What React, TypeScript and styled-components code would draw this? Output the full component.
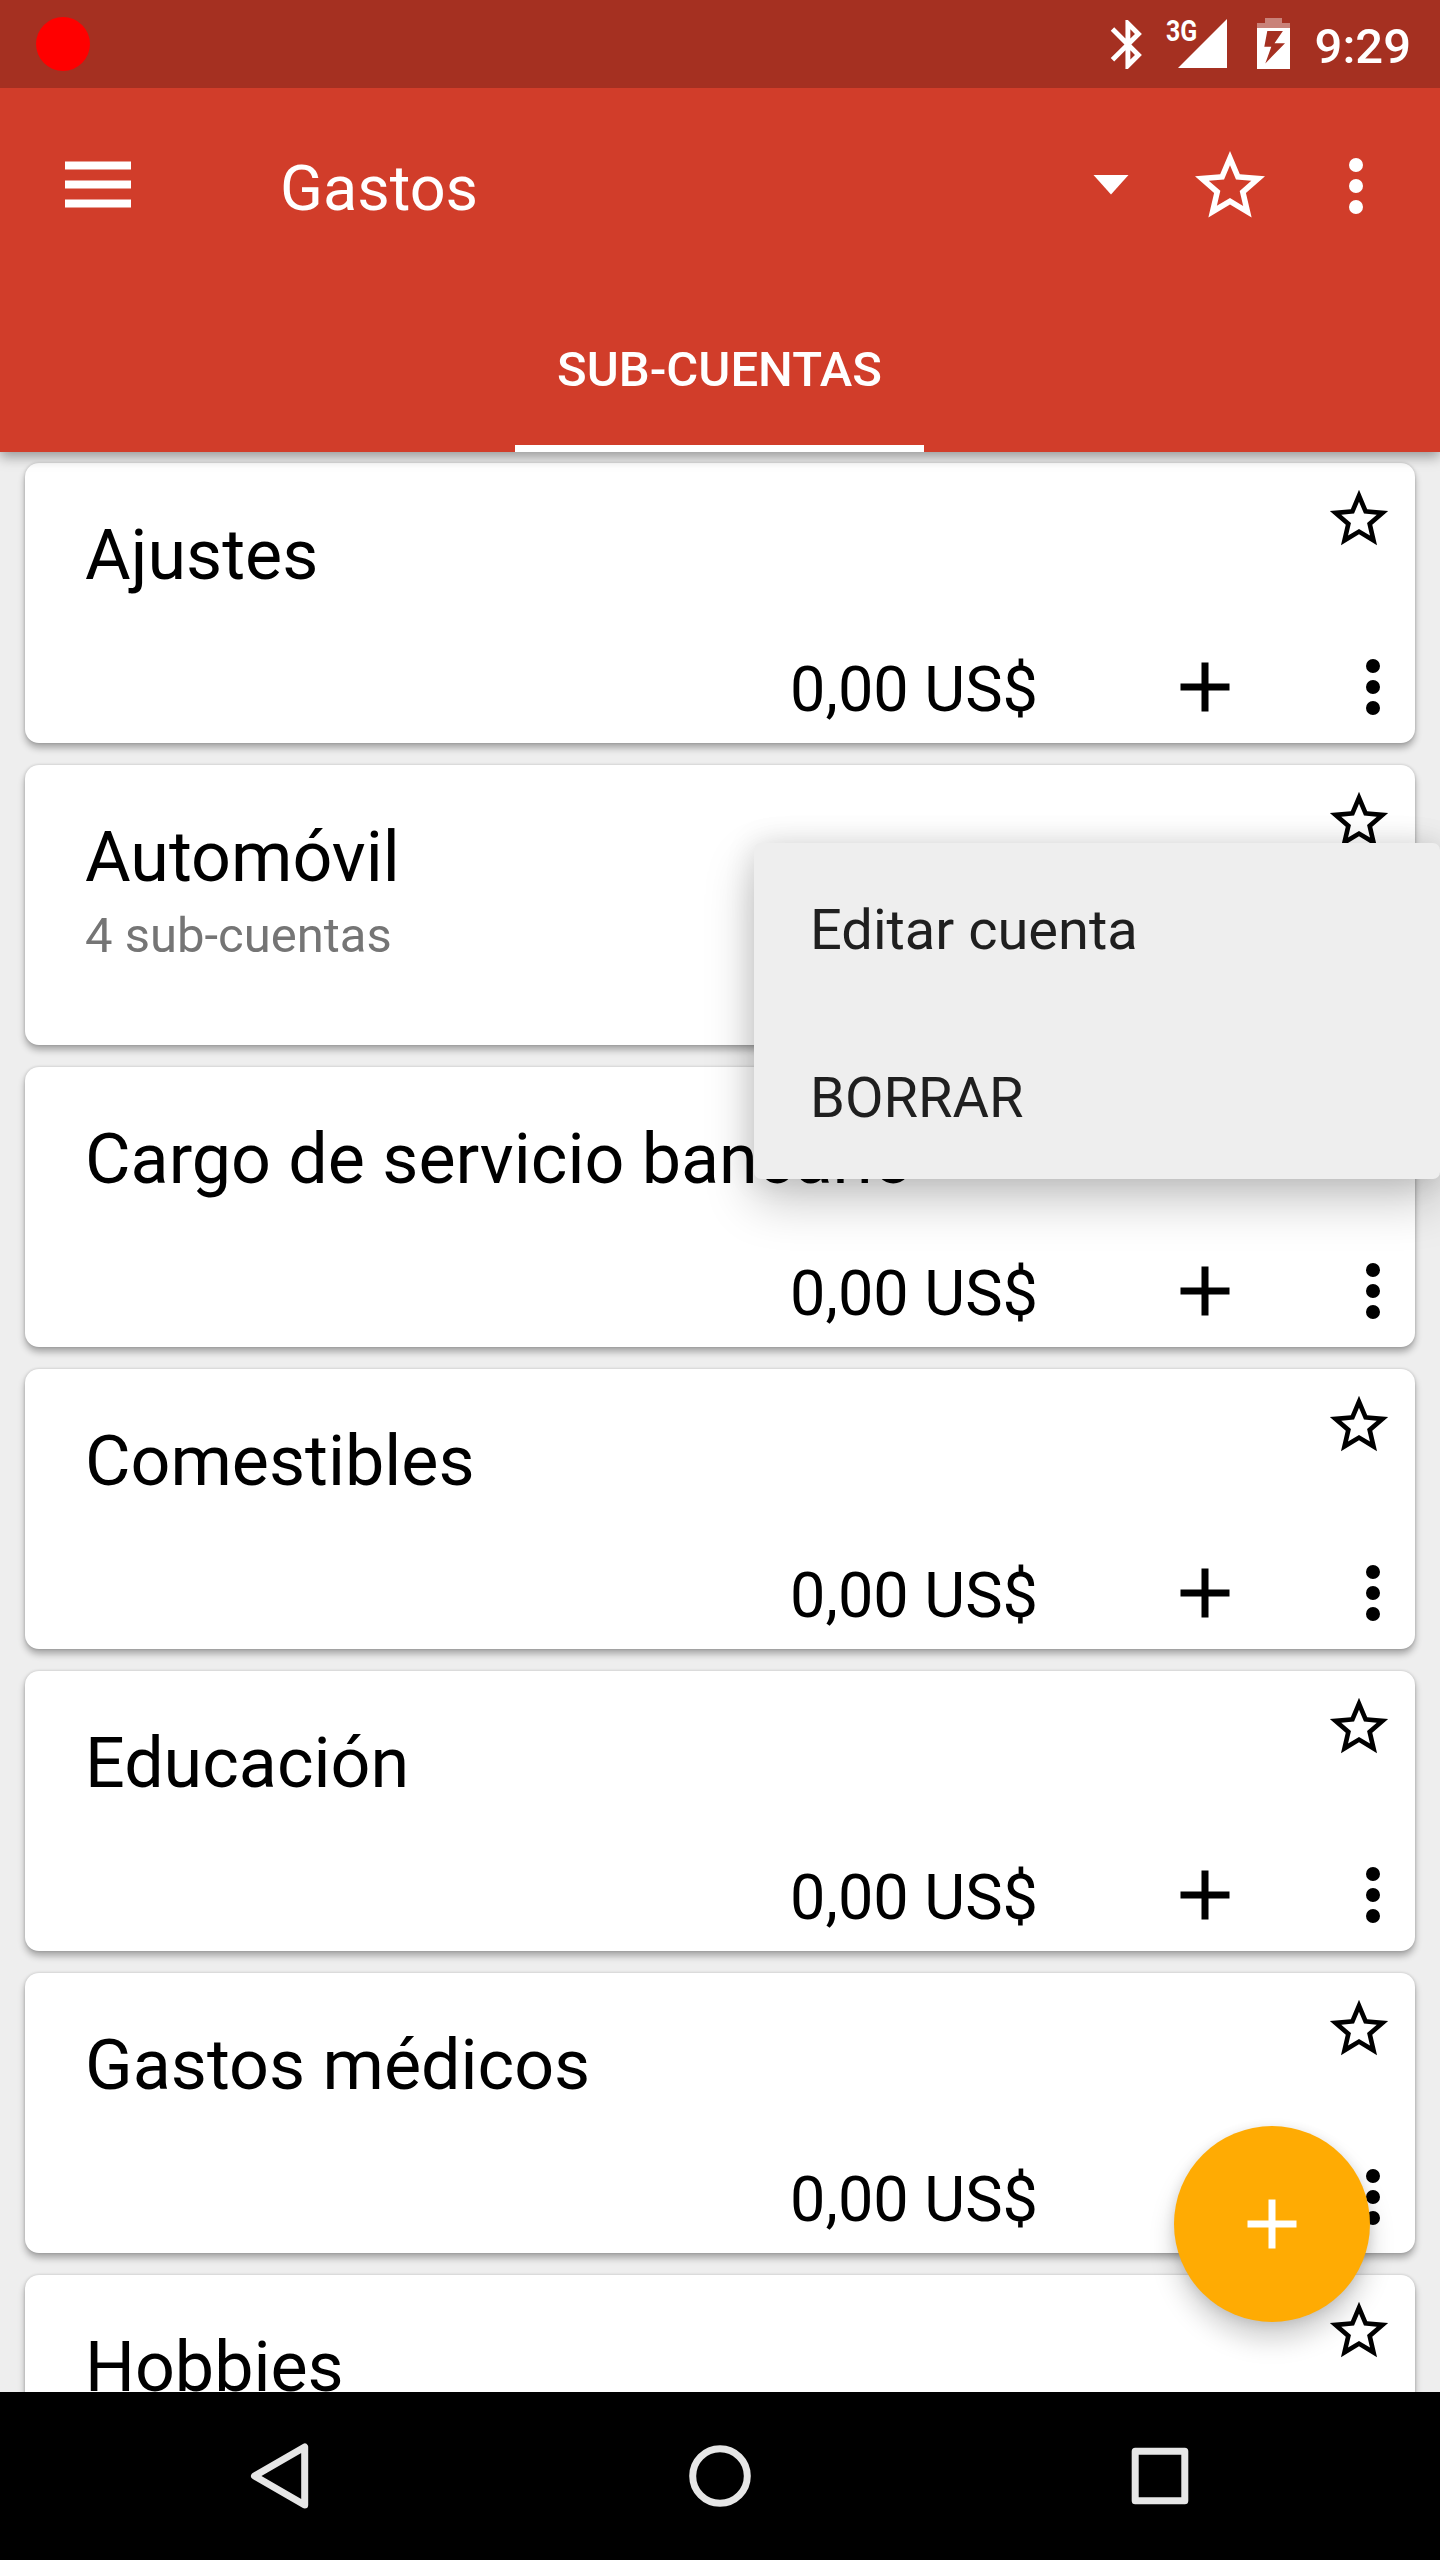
import React from "react";
import styled, { createGlobalStyle } from "styled-components";

const GlobalStyle = createGlobalStyle`
  * { box-sizing: border-box; }
  html, body { margin: 0; padding: 0; }
  body { font-family: Roboto, "Noto Sans", sans-serif; color: #000; }
  button { border: 0; padding: 0; background: none; font: inherit; color: inherit; }
  svg { display: block; flex: none; }
`;

const Screen = styled.div`
  position: relative;
  display: flex;
  flex-direction: column;
  width: 1440px;
  height: 2560px;
  overflow: hidden;
  background: #eeeeee;
`;

const StatusBar = styled.header`
  display: flex;
  align-items: center;
  justify-content: space-between;
  height: 88px;
  flex: none;
  padding: 0 29px 0 36px;
  background: #a53021;
  color: #fff;
  z-index: 2;
`;

const RecordDot = styled.span`
  width: 54px;
  height: 54px;
  border-radius: 50%;
  background: #ff0000;
`;

const StatusIcons = styled.div`
  display: flex;
  align-items: center;
  height: 88px;
`;

const Clock = styled.time`
  margin-left: 21px;
  padding-top: 5px;
  font-size: 49px;
  font-weight: 500;
  line-height: 58px;
`;

const AppBar = styled.section`
  display: flex;
  flex-direction: column;
  height: 364px;
  flex: none;
  background: #d13d2a;
  color: #fff;
  box-shadow: 0 5px 12px rgba(0, 0, 0, 0.36);
  z-index: 1;
`;

const Toolbar = styled.div`
  display: flex;
  align-items: center;
  height: 196px;
  padding: 0 42px 0 56px;
`;

const IconButton = styled.button<{ $gap?: number }>`
  display: flex;
  align-items: center;
  justify-content: center;
  width: 84px;
  height: 84px;
  flex: none;
  margin-left: ${(p) => p.$gap ?? 0}px;
`;

const PageTitle = styled.h1`
  flex: 1;
  margin: 0 0 0 140px;
  padding-top: 5px;
  font-size: 63px;
  font-weight: 400;
  line-height: 74px;
`;

const Tabs = styled.nav`
  display: flex;
  justify-content: center;
  height: 168px;
`;

const Tab = styled.a`
  display: flex;
  align-items: center;
  justify-content: center;
  width: 409px;
  margin-right: 1px;
  padding-top: 10px;
  border-bottom: 7px solid #fff;
  font-size: 49px;
  font-weight: 500;
  white-space: nowrap;
`;

const AccountList = styled.main`
  display: flex;
  flex-direction: column;
  gap: 22px;
  flex: 1;
  min-height: 0;
  overflow: hidden;
  padding: 11px 25px 0;
`;

const Card = styled.article`
  display: flex;
  flex-direction: column;
  justify-content: space-between;
  height: 280px;
  flex: none;
  border-radius: 14px;
  background: #fff;
  box-shadow: 0 5px 7px rgba(0, 0, 0, 0.3), 0 0 3px rgba(0, 0, 0, 0.18);
`;

const CardHead = styled.div`
  display: flex;
  justify-content: space-between;
  height: 168px;
  padding: 0 21px 0 60px;
`;

const Names = styled.div`
  display: flex;
  flex-direction: column;
  padding-top: 51px;
`;

const AccountName = styled.h2`
  margin: 0;
  font-size: 70px;
  font-weight: 400;
  line-height: 82px;
  white-space: nowrap;
`;

const SubCount = styled.p`
  margin: 9px 0 0;
  font-size: 49px;
  line-height: 57px;
  color: #757575;
`;

const StarSlot = styled.button`
  display: flex;
  width: 70px;
  height: 70px;
  margin-top: 21px;
`;

const CardFoot = styled.div`
  display: flex;
  align-items: center;
  justify-content: flex-end;
  height: 112px;
`;

const Balance = styled.span`
  padding-top: 6px;
  font-size: 63px;
  line-height: 74px;
`;

const Popup = styled.ul`
  position: absolute;
  left: 754px;
  top: 843px;
  width: 686px;
  margin: 0;
  padding: 0;
  list-style: none;
  border-radius: 7px;
  background: #eeeeee;
  box-shadow: 0 22px 50px rgba(0, 0, 0, 0.22), 0 0 30px rgba(0, 0, 0, 0.12);
  z-index: 3;
`;

const PopupItem = styled.li`
  display: flex;
  align-items: center;
  height: 168px;
  padding: 6px 56px 0;
  font-size: 56px;
  color: #1f1f1f;
`;

const Fab = styled.button`
  position: absolute;
  left: 1174px;
  top: 2126px;
  display: flex;
  align-items: center;
  justify-content: center;
  width: 196px;
  height: 196px;
  border-radius: 50%;
  background: #ffab03;
  color: #fff;
  box-shadow: 0 18px 26px rgba(0, 0, 0, 0.18), 0 2px 12px rgba(0, 0, 0, 0.12);
  z-index: 3;
`;

const NavBar = styled.footer`
  display: flex;
  align-items: center;
  height: 168px;
  flex: none;
  padding-left: 238px;
  background: #000;
  z-index: 2;
`;

const STAR =
  "M22 9.24l-7.19-.62L12 2 9.19 8.63 2 9.24l5.46 4.73L5.82 21 12 17.27 18.18 21l-1.63-7.03L22 9.24zM12 15.4l-3.76 2.27 1-4.28-3.32-2.88 4.38-.38L12 6.1l1.71 4.04 4.38.38-3.32 2.88 1 4.28L12 15.4z";

const Glyph = ({ d, size = 84 }: { d: string; size?: number }) => (
  <svg width={size} height={size} viewBox="0 0 24 24" fill="currentColor">
    <path d={d} />
  </svg>
);

const PLUS = "M19 13h-6v6h-2v-6H5v-2h6V5h2v6h6v2z";
const MORE =
  "M12 8a2 2 0 1 0 0-4 2 2 0 0 0 0 4zm0 2a2 2 0 1 0 0 4 2 2 0 0 0 0-4zm0 6a2 2 0 1 0 0 4 2 2 0 0 0 0-4z";

const MenuIcon = () => (
  <svg width="84" height="84" viewBox="0 0 84 84" fill="#fff">
    <path d="M9 17.6h66v7.8H9zM9 36.6h66v7.8H9zM9 55.6h66v7.8H9z" />
  </svg>
);

const CaretIcon = () => (
  <svg width="84" height="84" viewBox="0 0 84 84" fill="#fff">
    <path d="M24.5 31h35L42 50.5z" />
  </svg>
);

const StatusGlyphs = () => (
  <svg width="196" height="88" viewBox="1098 0 196 88" fill="#fff">
    <path
      transform="translate(1098.5 15) scale(2.45)"
      d="M17.71 7.71L12 2h-1v7.59L6.41 5 5 6.41 10.59 12 5 17.59 6.41 19 11 14.41V22h1l5.71-5.71-4.3-4.29 4.3-4.29zM13 5.83l1.88 1.88L13 9.59V5.83zm1.88 10.46L13 18.17v-3.76l1.88 1.88z"
    />
    <text
      transform="translate(1166 41) scale(0.86 1)"
      fontFamily="Roboto, sans-serif"
      fontSize="29"
      fontWeight="700"
    >
      3G
    </text>
    <path d="M1178 68h49V19z" />
    <path opacity=".4" d="M1265 18h17v5h8v5h-33v-5h8z" />
    <path
      fillRule="evenodd"
      d="M1257 28h33v41h-33zM1267.3 31h15.6l-8.4 12.2h10.5l-19.7 20.2 6-16.7h-7z"
    />
  </svg>
);

const accounts: { name: string; sub?: string }[] = [
  { name: "Ajustes" },
  { name: "Automóvil", sub: "4 sub-cuentas" },
  { name: "Cargo de servicio bancario" },
  { name: "Comestibles" },
  { name: "Educación" },
  { name: "Gastos médicos" },
  { name: "Hobbies" },
];

const AccountCard = ({ name, sub }: { name: string; sub?: string }) => (
  <Card>
    <CardHead>
      <Names>
        <AccountName>{name}</AccountName>
        {sub && <SubCount>{sub}</SubCount>}
      </Names>
      <StarSlot aria-label="Favorito">
        <Glyph d={STAR} size={70} />
      </StarSlot>
    </CardHead>
    <CardFoot>
      {!sub && <Balance>0,00 US$</Balance>}
      <IconButton $gap={125} aria-label="Añadir">
        <Glyph d={PLUS} />
      </IconButton>
      <IconButton $gap={84} aria-label="Opciones">
        <Glyph d={MORE} />
      </IconButton>
    </CardFoot>
  </Card>
);

export default function App() {
  return (
    <Screen>
      <GlobalStyle />
      <StatusBar>
        <RecordDot />
        <StatusIcons>
          <StatusGlyphs />
          <Clock>9:29</Clock>
        </StatusIcons>
      </StatusBar>
      <AppBar>
        <Toolbar>
          <IconButton aria-label="Menú">
            <MenuIcon />
          </IconButton>
          <PageTitle>Gastos</PageTitle>
          <IconButton aria-label="Cuentas">
            <CaretIcon />
          </IconButton>
          <IconButton $gap={35} aria-label="Favorito">
            <Glyph d={STAR} />
          </IconButton>
          <IconButton $gap={42} aria-label="Más">
            <Glyph d={MORE} />
          </IconButton>
        </Toolbar>
        <Tabs>
          <Tab>SUB-CUENTAS</Tab>
        </Tabs>
      </AppBar>
      <AccountList>
        {accounts.map((a) => (
          <AccountCard key={a.name} {...a} />
        ))}
      </AccountList>
      <Popup>
        <PopupItem>Editar cuenta</PopupItem>
        <PopupItem>BORRAR</PopupItem>
      </Popup>
      <Fab aria-label="Nueva cuenta">
        <Glyph d={PLUS} />
      </Fab>
      <NavBar>
        <IconButton aria-label="Atrás">
          <svg width="84" height="84" viewBox="0 0 84 84" fill="none" stroke="#e6e6e6" strokeWidth="7" strokeLinejoin="round">
            <path d="M66.7 13v58L16.5 42z" />
          </svg>
        </IconButton>
        <IconButton $gap={356} aria-label="Inicio">
          <svg width="84" height="84" viewBox="0 0 84 84" fill="none" stroke="#e6e6e6" strokeWidth="7">
            <circle cx="42" cy="42" r="27.3" />
          </svg>
        </IconButton>
        <IconButton $gap={356} aria-label="Recientes">
          <svg width="84" height="84" viewBox="0 0 84 84" fill="none" stroke="#e6e6e6" strokeWidth="7" strokeLinejoin="round">
            <path d="M17.2 17.2h49.6v49.6H17.2z" />
          </svg>
        </IconButton>
      </NavBar>
    </Screen>
  );
}
